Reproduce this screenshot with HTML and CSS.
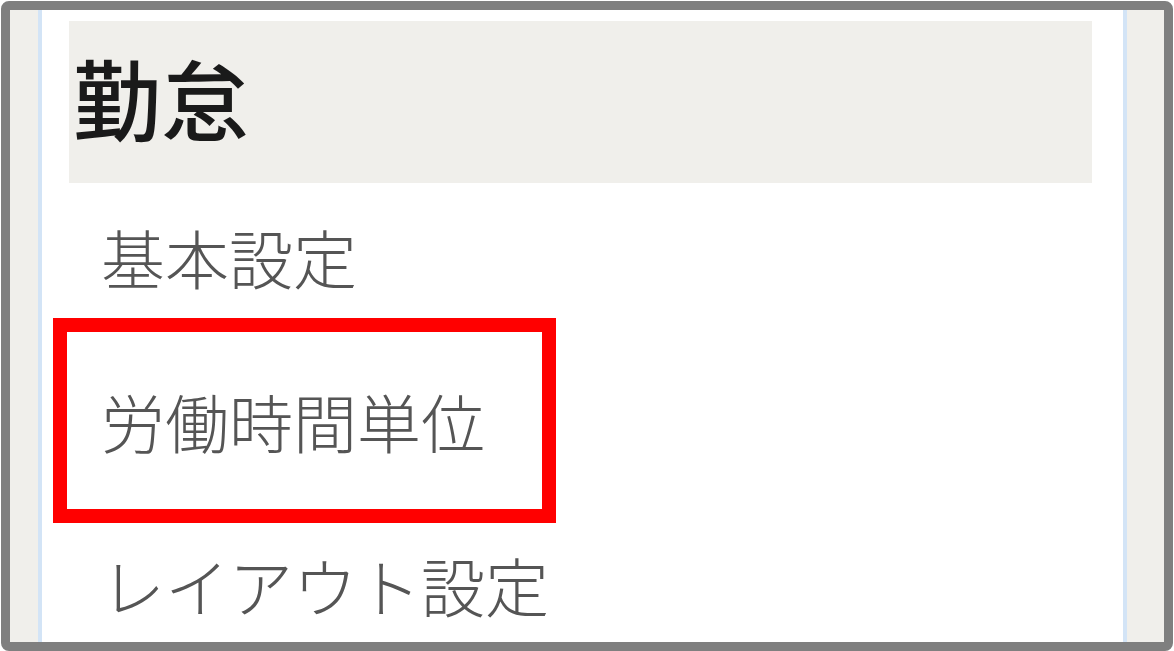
FILE: index.html
```html
<!DOCTYPE html>
<html lang="ja">
<head>
    <meta charset="UTF-8">
    <title>勤怠</title>
    <link rel="stylesheet" href="styles.css">
</head>
<body>
    <div class="frame">
        <div class="panel">
            <div class="panel-title">勤怠</div>
            <ul class="menu">
                <li class="menu-item">基本設定</li>
                <li class="menu-item highlighted">労働時間単位</li>
                <li class="menu-item">レイアウト設定</li>
            </ul>
        </div>
    </div>
</body>
</html>
```

FILE: styles.css
```css
body {
    margin: 0;
    background: white;
    font-family: "Noto Sans CJK JP", "Noto Sans", sans-serif;
}

.frame {
    box-sizing: border-box;
    width: 1172px;
    height: 650px;
    margin: 1px 0 0 1px;
    border: 9px solid #7f7f7f;
    border-radius: 8px;
    background: #f0efeb;
    padding: 0 37px 0 28px;
    overflow: hidden;
}

.panel {
    box-sizing: border-box;
    height: 100%;
    background: white;
    border-left: 4px solid #d3e4f6;
    border-right: 4px solid #d3e4f6;
    padding: 11px 31px 0 27px;
}

.panel-title {
    box-sizing: border-box;
    height: 162px;
    background: #f0efeb;
    display: flex;
    align-items: center;
    padding: 0 0 14px 4px;
    font-size: 88px;
    font-weight: 500;
    color: #1a1a1a;
}

.menu {
    list-style: none;
    margin: -9px 0 0;
    padding: 0;
}

.menu-item {
    height: 164px;
    display: flex;
    align-items: center;
    padding-left: 32px;
    font-size: 64px;
    font-weight: 300;
    color: #555;
}

.highlighted {
    position: relative;
}

/* red annotation box */
.highlighted::before {
    content: "";
    position: absolute;
    left: -16px;
    top: -20px;
    width: 503px;
    height: 205px;
    box-sizing: border-box;
    border: 14px solid #ff0000;
}
```
